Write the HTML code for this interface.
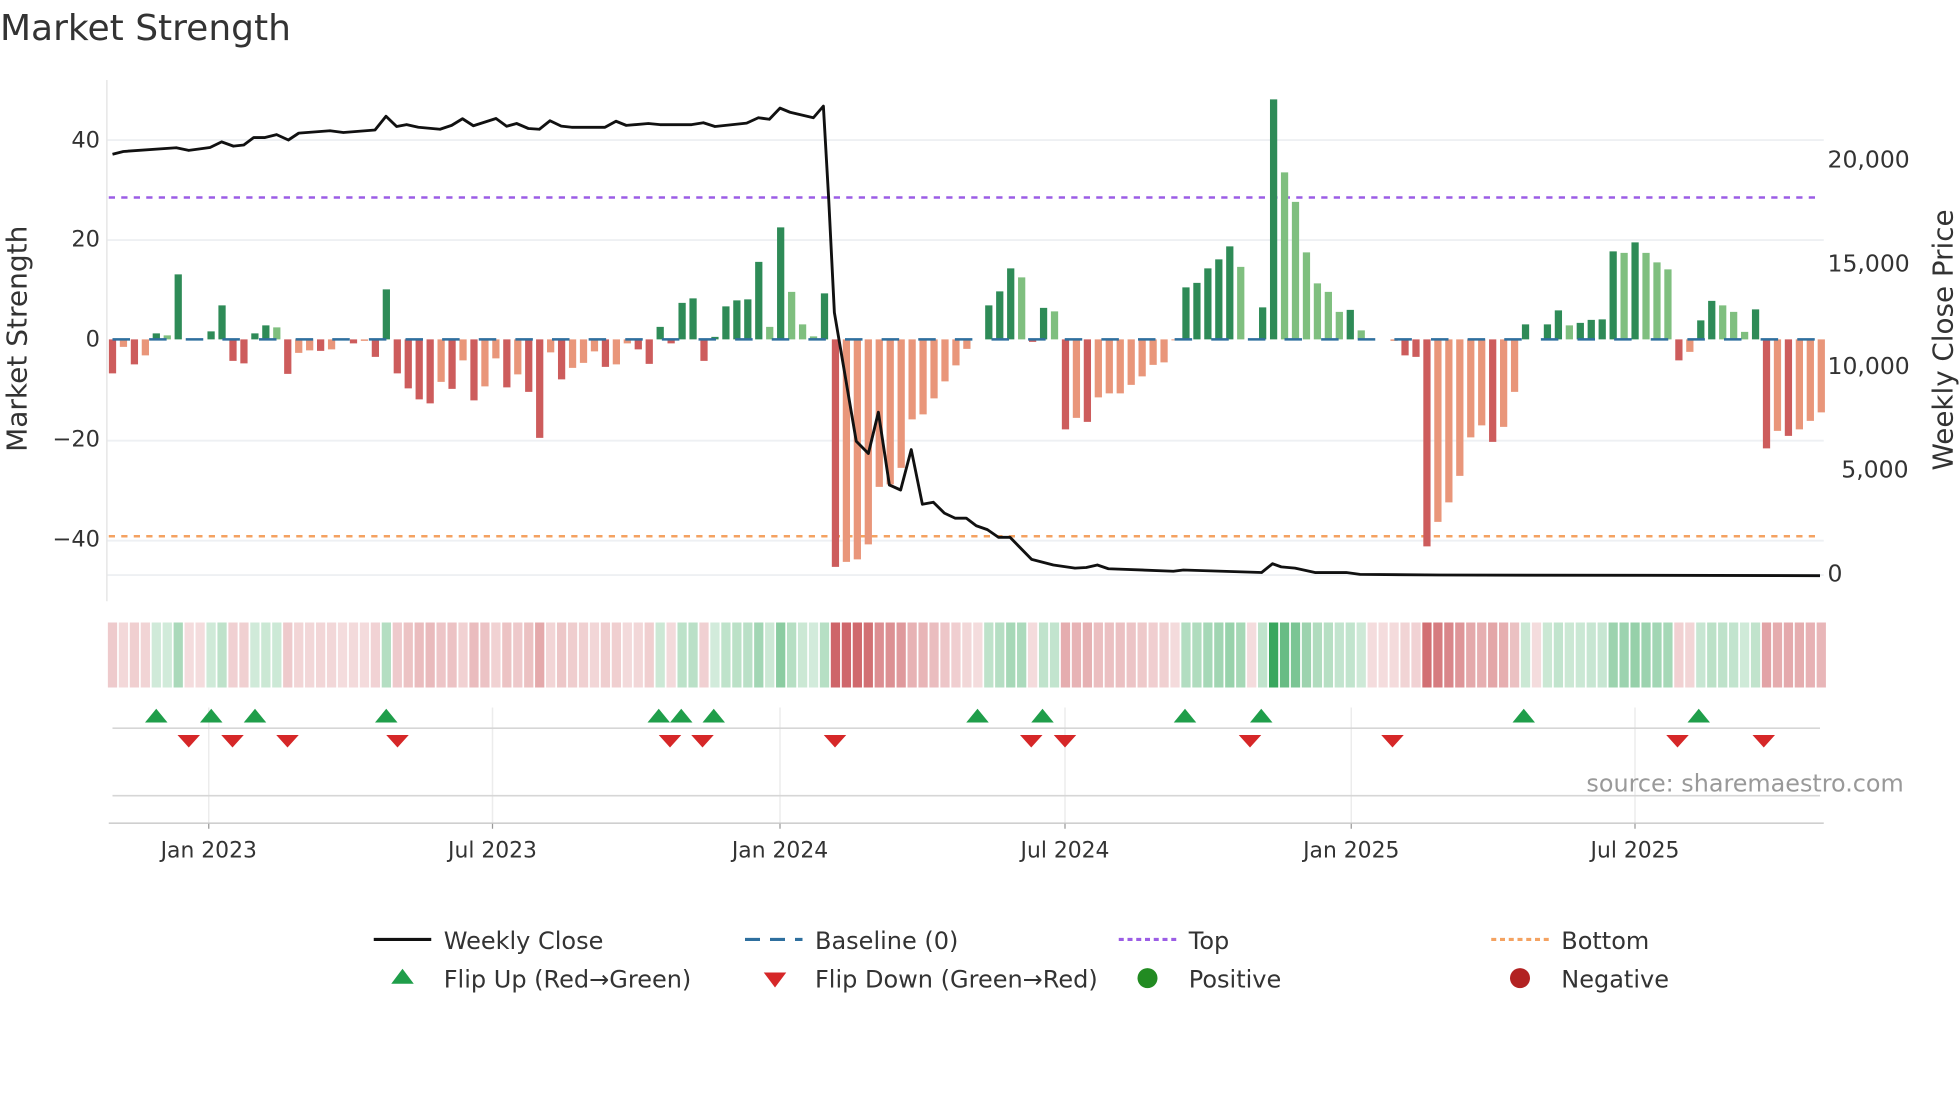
<!DOCTYPE html>
<html><head><meta charset="utf-8"><style>
html,body{margin:0;padding:0;background:#fff;}
svg{display:block;font-family:"DejaVu Sans","Liberation Sans",sans-serif;}
</style></head><body>
<svg id="s" width="1960" height="1102" viewBox="0 0 1568 881.6" xmlns="http://www.w3.org/2000/svg">
<rect width="1568" height="882" fill="#fff"/>
<text x="0" y="32" font-size="28.8" fill="#333">Market Strength</text>
<g stroke="#eef0f3" stroke-width="1.5">
<line x1="86" y1="112" x2="1459" y2="112"/>
<line x1="86" y1="192" x2="1459" y2="192"/>
<line x1="86" y1="352.5" x2="1459" y2="352.5"/>
<line x1="86" y1="432.5" x2="1459" y2="432.5"/>
<line x1="86" y1="460" x2="1459" y2="460"/>
</g>
<line x1="85.5" y1="64" x2="85.5" y2="481" stroke="#e6e6e6" stroke-width="1.2"/>
<g font-size="18" fill="#333" text-anchor="end">
<text x="80" y="118">40</text><text x="80" y="197">20</text><text x="80" y="277">0</text>
<text x="80" y="357">−20</text><text x="80" y="437">−40</text>
</g>
<g font-size="18.8" fill="#333">
<text x="1462" y="134">20,000</text><text x="1462" y="217">15,000</text><text x="1462" y="299">10,000</text>
<text x="1473" y="382">5,000</text><text x="1462" y="465">0</text>
</g>
<text transform="translate(21,271) rotate(-90)" font-size="22.4" fill="#333" text-anchor="middle">Market Strength</text>
<text transform="translate(1562,272) rotate(-90)" font-size="22.2" fill="#333" text-anchor="middle">Weekly Close Price</text>
<line x1="87" y1="158" x2="1457" y2="158" stroke="#9b5de5" stroke-width="2" stroke-dasharray="5 5"/>
<line x1="87" y1="429" x2="1457" y2="429" stroke="#f4a261" stroke-width="2" stroke-dasharray="5 5"/>
<g id="bars"></g>
<line x1="90" y1="271.5" x2="1457" y2="271.5" stroke="#2e6f9e" stroke-width="2" stroke-dasharray="14 15.3"/>
<polyline fill="none" stroke="#111" stroke-width="2.3" stroke-linejoin="round" points="90,123.4 98.7,121.2 141,118.2 151,120.3 168,118 177.3,113.5 186.7,116.9 195,116 203,110 212,110 221.3,107.7 230.7,112 239,106.5 264,104.6 274.7,106 300,104 308.8,93 317.3,101.2 325.3,99.7 334.7,101.8 352,103.4 361.3,100.3 370,95 378.7,100.6 396.8,94.8 405.3,101 413.3,98.8 422.7,102.8 431.5,103.4 440,96.6 449,100.9 457.3,101.8 484,101.8 492.8,97 501,100.3 518.7,98.8 528,99.7 553.3,99.7 562.7,98.2 572,101.2 597.3,98.5 606.7,94.2 615.5,95.4 624,86.5 632,89.8 650.7,94.2 658.7,84.9 663,160 667.5,250 676,300 685,353 694.7,362.8 702.7,329.8 711.5,388 720.5,392 729,359.7 737.9,403.4 746.7,401.8 755.5,410.5 764,414.5 773,414.5 781,420.6 789.9,423.7 798.7,429.8 808,429.8 825.3,447.5 842.7,452 860,454.5 869,454 877.9,452 886.7,455 938.7,457 946.7,456 1009.3,458 1018,451 1025,453.5 1036,454.5 1052,458 1077,458 1088,459.5 1152,460 1456,460.5"/>
<g id="heat"></g>
<g stroke="#ececec" stroke-width="1.2">
<line x1="167" y1="566" x2="167" y2="658"/><line x1="394" y1="566" x2="394" y2="658"/>
<line x1="624" y1="566" x2="624" y2="658"/><line x1="852" y1="566" x2="852" y2="658"/>
<line x1="1081" y1="566" x2="1081" y2="658"/><line x1="1308" y1="566" x2="1308" y2="658"/>
</g>
<line x1="90" y1="582.5" x2="1456" y2="582.5" stroke="#d6d6d6" stroke-width="1.3"/>
<line x1="90" y1="636.5" x2="1456" y2="636.5" stroke="#d6d6d6" stroke-width="1.3"/>
<line x1="87" y1="658.5" x2="1459" y2="658.5" stroke="#cfcfcf" stroke-width="1.3"/>
<g stroke="#999" stroke-width="1">
<line x1="167" y1="659" x2="167" y2="663"/><line x1="394" y1="659" x2="394" y2="663"/>
<line x1="624" y1="659" x2="624" y2="663"/><line x1="852" y1="659" x2="852" y2="663"/>
<line x1="1081" y1="659" x2="1081" y2="663"/><line x1="1308" y1="659" x2="1308" y2="663"/>
</g>
<g id="flips"></g>
<text x="1523" y="633" font-size="19.1" fill="#999" text-anchor="end">source: sharemaestro.com</text>
<g font-size="17.5" fill="#333" text-anchor="middle">
<text x="167" y="686">Jan 2023</text><text x="394" y="686">Jul 2023</text><text x="624" y="686">Jan 2024</text>
<text x="852" y="686">Jul 2024</text><text x="1081" y="686">Jan 2025</text><text x="1308" y="686">Jul 2025</text>
</g>
<line x1="299" y1="751.5" x2="345" y2="751.5" stroke="#111" stroke-width="2.5"/>
<line x1="596" y1="751.5" x2="642" y2="751.5" stroke="#2e6f9e" stroke-width="2.5" stroke-dasharray="12 8"/>
<line x1="895" y1="751.5" x2="941" y2="751.5" stroke="#9b5de5" stroke-width="2.5" stroke-dasharray="4 3"/>
<line x1="1193" y1="751.5" x2="1239" y2="751.5" stroke="#f4a261" stroke-width="2.5" stroke-dasharray="4 3"/>
<polygon points="313,787 331,787 322,775" fill="#1f9e4a"/>
<polygon points="611,778 629,778 620,790" fill="#d62728"/>
<circle cx="918" cy="782.5" r="8" fill="#228b22"/>
<circle cx="1216" cy="782.5" r="8" fill="#b22222"/>
<g font-size="19.2" fill="#333">
<text x="355" y="759">Weekly Close</text><text x="652" y="759">Baseline (0)</text>
<text x="951" y="759">Top</text><text x="1249" y="759">Bottom</text>
<text x="355" y="790">Flip Up (Red→Green)</text><text x="652" y="790">Flip Down (Green→Red)</text>
<text x="951" y="790">Positive</text><text x="1249" y="790">Negative</text>
</g>
</svg>
<script>
var d="-6.8R -1.5S -5R -3.2S 1.2D 0.8L 13D 0N 0N 1.6D 6.8D -4.3R -4.8R 1.2D 2.8D 2.4L -6.9R -2.7S -2.2S -2.3R -2S 0N -0.8R -0.3S -3.5R 10D -6.8R -9.8R -12R -12.8R -8.5S -9.9R -4.2S -12.2R -9.4S -3.8S -9.6R -7S -10.5R -19.7R -2.6S -8R -5.7S -4.7S -2.4S -5.5R -5S -0.8S -2R -4.9R 2.5D -0.8R 7.3D 8.2D -4.3R 0.5D 6.6D 7.8D 8D 15.5D 2.5L 22.4D 9.5L 3L 0.6L 9.2D -45.5R -44.5S -44S -41S -29.5S -29S -25.7S -16S -15S -11.8S -8.4S -5.2S -1.9S 0N 6.8D 9.6D 14.2D 12.4L -0.5R 6.3D 5.6L -18R -15.7S -16.5R -11.6S -10.8S -10.8S -9.1S -7.4S -5.1S -4.6S -0.2S 10.4D 11.3D 14.2D 16D 18.6D 14.5L 0N 6.4D 48D 33.4L 27.5L 17.4L 11.2L 9.5L 5.5L 5.9D 1.8L 0N 0N -0.3S -3.2R -3.5R -41.4R -36.5S -32.6S -27.3S -19.6S -17.2S -20.5R -17.5S -10.5S 3D 0N 3D 5.8D 2.8L 3.3D 3.9D 4D 17.6D 17.3L 19.4D 17.3L 15.4L 14L -4.2R -2.5S 3.8D 7.7D 6.8L 5.5L 1.5L 6D -21.8R -18.3S -19.3R -18S -16.3S -14.6S".split(" ");
var col={D:"#2e8b57",L:"#7fbf7f",R:"#cd5c5c",S:"#e9967a",N:"#fff"};
var b="",h="";
for(var i=0;i<d.length;i++){
 var v=parseFloat(d[i]),t=d[i].slice(-1),x=90+8.763*i;
 if(v!==0){var y=v>0?271.5-v*4:271.5,hh=Math.abs(v)*4;
  b+='<rect x="'+(x-2.9).toFixed(2)+'" y="'+y.toFixed(2)+'" width="5.8" height="'+hh.toFixed(2)+'" fill="'+col[t]+'"/>';}
 var a=0.2+0.72*Math.min(Math.abs(v)/48,1);
 var c=v>0?"rgba(40,160,80,"+a.toFixed(3)+")":"rgba(200,80,85,"+a.toFixed(3)+")";
 h+='<rect x="'+(x-3.7).toFixed(2)+'" y="498" width="7.4" height="52" fill="'+c+'"/>';
}
document.getElementById("bars").innerHTML=b;
document.getElementById("heat").innerHTML=h;
var up=[125,169,204,309,527,545,571,782,834,948,1009,1219,1359],dn=[151,186,230,318,536,562,668,825,852,1000,1114,1342,1411],f="";
up.forEach(function(x){f+='<polygon points="'+(x-9)+',578 '+(x+9)+',578 '+x+',567" fill="#1f9e4a"/>';});
dn.forEach(function(x){f+='<polygon points="'+(x-9)+',588 '+(x+9)+',588 '+x+',598" fill="#d62728"/>';});
document.getElementById("flips").innerHTML=f;
</script>
</body></html>
